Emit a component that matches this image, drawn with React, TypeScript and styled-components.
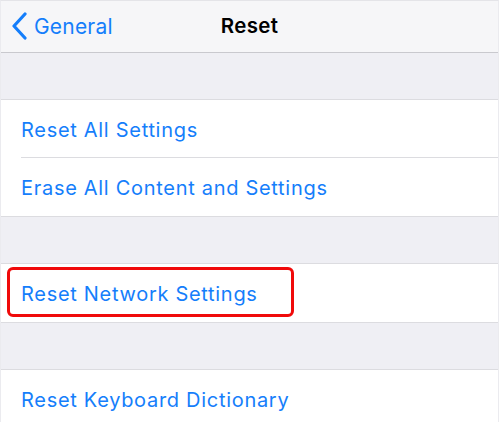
import React from "react";
import styled, { createGlobalStyle } from "styled-components";

const GlobalStyle = createGlobalStyle`
  html, body {
    margin: 0;
    padding: 0;
    background: #efeff4;
  }
  * {
    box-sizing: border-box;
  }
`;

const BLUE = "#157efb";

interface RowProps {
  last?: boolean;
}

const groups: { label: string; highlight?: boolean }[][] = [
  [{ label: "Reset All Settings" }, { label: "Erase All Content and Settings" }],
  [{ label: "Reset Network Settings", highlight: true }],
  [{ label: "Reset Keyboard Dictionary" }],
];

function App() {
  return (
    <>
      <GlobalStyle />
      <Screen>
        <NavBar>
          <BackButton>
            <svg width="17" height="28" viewBox="0 0 17 28">
              <path
                d="M14 2 L3 14 L14 26"
                fill="none"
                stroke={BLUE}
                strokeWidth="3.2"
                strokeLinecap="round"
                strokeLinejoin="round"
              />
            </svg>
            <span>General</span>
          </BackButton>
          <Title>Reset</Title>
        </NavBar>
        {groups.map((group, gi) => (
          <Section key={gi}>
            <Spacer />
            <Group>
              {group.map((item, i) => (
                <Row key={item.label} last={i === group.length - 1}>
                  <RowLabel>{item.label}</RowLabel>
                  {item.highlight && <Highlight />}
                </Row>
              ))}
            </Group>
          </Section>
        ))}
      </Screen>
    </>
  );
}

export default App;

const Screen = styled.div`
  width: 499px;
  height: 422px;
  overflow: hidden;
  background: #efeff4;
  border-top: 1px solid #e4e4e8;
  border-left: 1px solid #ebebef;
  border-right: 1px solid #ebebef;
  font-family: Inter, "Liberation Sans", Arial, sans-serif;
`;

const NavBar = styled.div`
  position: relative;
  display: flex;
  align-items: center;
  justify-content: center;
  height: 52px;
  background: #f6f6f8;
  border-bottom: 1px solid #c9c9ce;
`;

const BackButton = styled.div`
  position: absolute;
  left: 10px;
  top: 0;
  bottom: 0;
  display: flex;
  align-items: center;
  gap: 6px;
  color: ${BLUE};
  font-size: 21px;
  letter-spacing: 0.2px;
  padding-bottom: 1px;

  & svg {
    display: block;
  }
`;

const Title = styled.div`
  font-size: 20.5px;
  font-weight: 600;
  letter-spacing: 0.3px;
  color: #000;
  padding-bottom: 2px;
`;

const Section = styled.div`
  display: flex;
  flex-direction: column;
`;

const Spacer = styled.div`
  height: 46px;
  background: #efeff4;
`;

const Group = styled.div`
  background: #fff;
  border-top: 1px solid #dcdce0;
  border-bottom: 1px solid #dcdce0;
`;

const Row = styled.div<RowProps>`
  position: relative;
  display: flex;
  align-items: center;
  height: 58px;
  margin-left: 20px;
  padding-top: 2px;
  border-bottom: ${({ last }) => (last ? "none" : "1px solid #dcdce0")};
`;

const RowLabel = styled.span`
  color: ${BLUE};
  font-size: 20px;
  letter-spacing: 0.7px;
`;

const Highlight = styled.div`
  position: absolute;
  left: -14px;
  top: 3px;
  width: 287px;
  height: 50px;
  border: 3px solid #f00a0a;
  border-radius: 6px;
  pointer-events: none;
`;
